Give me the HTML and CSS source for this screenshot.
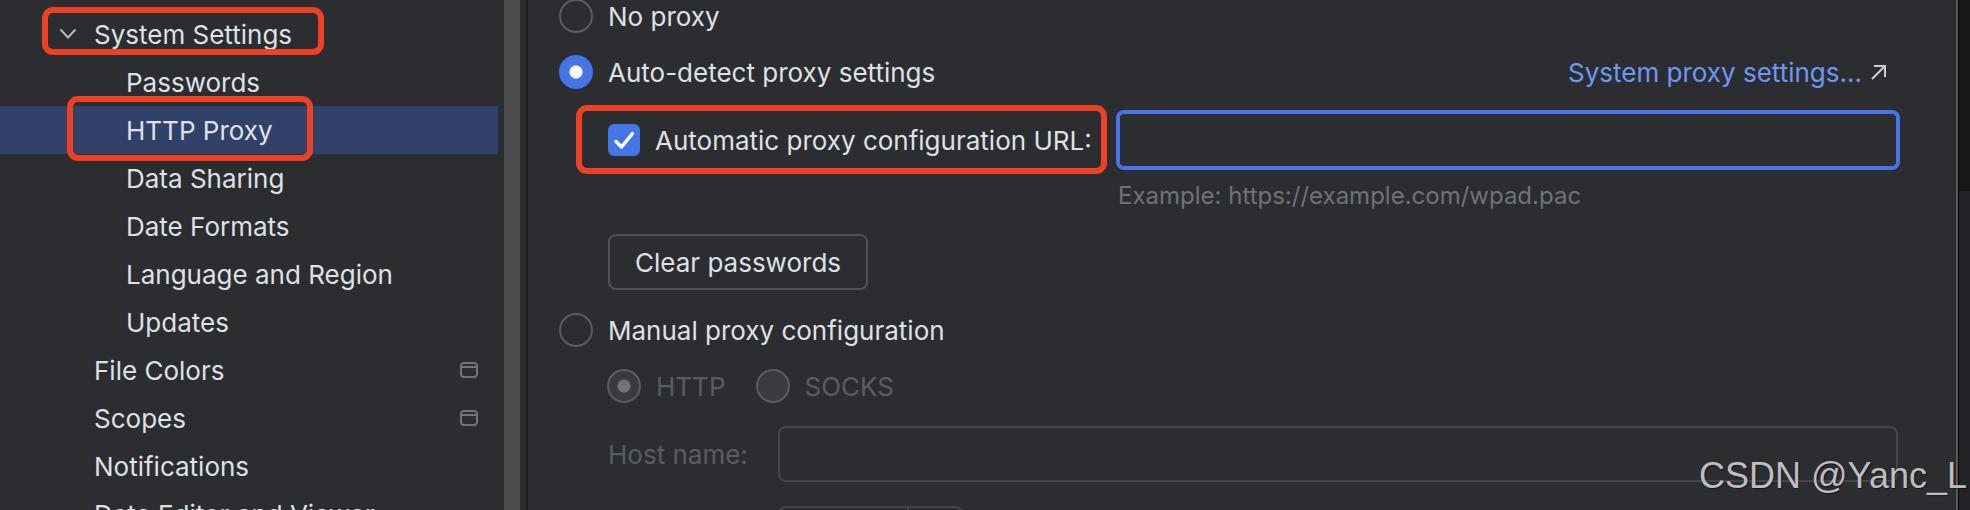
FILE: index.html
```html
<!DOCTYPE html>
<html lang="en">
<head>
<meta charset="utf-8">
<title>Settings - HTTP Proxy</title>
<link rel="stylesheet" href="styles.css">
</head>
<body>
<div class="window">
  <nav class="sidebar" aria-label="Settings categories">
    <ul class="tree">
      <li><a class="row" href="#system">
        <svg class="chevron" viewBox="0 0 18 12" aria-hidden="true"><path d="M2 2l7 7.500l7-7.500"/></svg>
        <span class="text marked marked-parent">System Settings</span></a></li>
      <li><a class="row child" href="#passwords"><span class="text">Passwords</span></a></li>
      <li><a class="row child selected" href="#proxy" aria-current="page"><span class="text marked marked-child">HTTP Proxy</span></a></li>
      <li><a class="row child" href="#sharing"><span class="text">Data Sharing</span></a></li>
      <li><a class="row child" href="#dates"><span class="text">Date Formats</span></a></li>
      <li><a class="row child" href="#language"><span class="text">Language and Region</span></a></li>
      <li><a class="row child" href="#updates"><span class="text">Updates</span></a></li>
      <li><a class="row" href="#colors"><span class="text">File Colors</span>
        <svg class="project" viewBox="0 0 18 16" aria-hidden="true"><rect x="1" y="1" width="16" height="14" rx="3"/><path d="M1 5h16"/></svg></a></li>
      <li><a class="row" href="#scopes"><span class="text">Scopes</span>
        <svg class="project" viewBox="0 0 18 16" aria-hidden="true"><rect x="1" y="1" width="16" height="14" rx="3"/><path d="M1 5h16"/></svg></a></li>
      <li><a class="row" href="#notifications"><span class="text">Notifications</span></a></li>
      <li><a class="row" href="#data"><span class="text">Data Editor and Viewer</span></a></li>
    </ul>
  </nav>
  <div class="scrollbar"></div>
  <main class="content">
    <form class="form">
      <div class="line">
        <label class="option"><input class="radio" type="radio" name="mode"><span class="text">No proxy</span></label>
      </div>
      <div class="line">
        <label class="option"><input class="radio" type="radio" name="mode" checked><span class="text">Auto-detect proxy settings</span></label>
        <a class="link" href="#system-proxy"><span class="text">System proxy settings...</span>
          <svg class="arrow" viewBox="0 0 16 16" aria-hidden="true"><path d="M1 15L14 2M3 2h11v11"/></svg></a>
      </div>
      <div class="auto">
        <label class="option marked marked-url"><input class="check" type="checkbox" checked><span class="text">Automatic proxy configuration URL:</span></label>
        <input class="field focused" type="text" aria-label="Automatic proxy configuration URL">
        <p class="hint">Example: https://example.com/wpad.pac</p>
      </div>
      <button class="button" type="button"><span class="text">Clear passwords</span></button>
      <div class="line">
        <label class="option"><input class="radio" type="radio" name="mode"><span class="text">Manual proxy configuration</span></label>
      </div>
      <div class="line protocols">
        <label class="option"><input class="radio" type="radio" name="protocol" checked disabled><span class="text">HTTP</span></label>
        <label class="option"><input class="radio" type="radio" name="protocol" disabled><span class="text">SOCKS</span></label>
      </div>
      <div class="manual">
        <label class="text" for="host">Host name:</label>
        <input class="field" id="host" type="text" disabled>
        <div class="spinner">
          <input class="spinner-value" type="text" aria-label="Port number" disabled>
          <button class="spinner-button" type="button" aria-label="Change port" disabled></button>
        </div>
      </div>
    </form>
  </main>
  <div class="backdrop"></div>
</div>
<div class="watermark">CSDN @Yanc_L</div>
</body>
</html>
```
FILE: styles.css
```css
* { box-sizing: border-box; }

body {
  margin: 0;
  background: #2b2d30;
  color: #dfe1e5;
  font-family: Inter, "Liberation Sans", sans-serif;
  font-size: 26px;
  line-height: 32px;
}

input, button { font: inherit; color: inherit; margin: 0; }

/* Optical centring of labels against icons and controls */
.text { display: block; padding-top: 2px; }

.window {
  display: flex;
  height: 100vh;
  overflow: hidden;
}

/* Category tree */
.sidebar { flex: 0 0 504px; padding: 10px 6px 0 0; }
.tree { list-style: none; margin: 0; padding: 0; }
.row {
  position: relative;
  display: flex;
  align-items: center;
  justify-content: space-between;
  height: 48px;
  padding: 0 20px 0 94px;
  color: inherit;
  text-decoration: none;
  white-space: nowrap;
}
.child { padding-left: 126px; }
.selected { background: #32416a; }
.chevron {
  position: absolute;
  left: 59px;
  width: 18px;
  height: 12px;
  fill: none;
  stroke: #b4b8bf;
  stroke-width: 2;
  stroke-linecap: round;
}
.project {
  width: 18px;
  height: 16px;
  fill: none;
  stroke: #6f737a;
  stroke-width: 2;
}
.scrollbar {
  flex: 0 0 24px;
  background: linear-gradient(to right, #4a4b4d 16px, #2b2d30 16px 22px, #1e1f22 22px);
}

/* Red call-out frames drawn over the labels */
.marked { position: relative; }
.marked::after {
  content: "";
  position: absolute;
  border: 6px solid #ed4025;
  border-radius: 11px;
  pointer-events: none;
}
.marked-parent::after { inset: -10px -32px -4px -52px; }
.marked-child::after { inset: -17px -40px -14px -59px; }
.marked-url::after { inset: -5px 9px -4px -32px; }

/* Proxy form */
.content { flex: 1; min-width: 0; padding: 0 56px 0 31px; }
.form { margin-top: -12px; }
.line {
  display: flex;
  align-items: center;
  justify-content: space-between;
  height: 56px;
}
.option { display: flex; align-items: center; gap: 15px; white-space: nowrap; }
.radio {
  appearance: none;
  width: 34px;
  height: 34px;
  border: 2px solid #5a5d63;
  border-radius: 50%;
}
.radio:checked {
  border-color: #4675e8;
  background: radial-gradient(circle, #fff 6px, #4675e8 7px);
}
.radio:disabled { border-color: #5a5d63; background: #393b40; }
.radio:disabled:checked { background: radial-gradient(circle, #6f737a 6px, #393b40 7px); }
.check {
  appearance: none;
  display: grid;
  place-items: center;
  width: 32px;
  height: 32px;
  border-radius: 6px;
  background: #4675e8;
}
.check::before {
  content: "";
  width: 24px;
  height: 24px;
  background: url("data:image/svg+xml,%3Csvg xmlns='http://www.w3.org/2000/svg' viewBox='0 0 24 24'%3E%3Cpath d='M4 13.500L9.500 19L20.500 5.500' fill='none' stroke='white' stroke-width='3.500' stroke-linecap='round' stroke-linejoin='round'/%3E%3C/svg%3E");
}
.link {
  display: flex;
  align-items: center;
  gap: 9px;
  padding-right: 13px;
  color: #6f98f5;
  text-decoration: none;
  white-space: nowrap;
}
.arrow { width: 16px; height: 16px; fill: none; stroke: #ced0d6; stroke-width: 2; }
.auto {
  display: grid;
  grid-template-columns: 508px 1fr;
  align-items: stretch;
  row-gap: 10px;
  margin-top: 10px;
  padding-left: 49px;
}
.field {
  width: 100%;
  height: 56px;
  padding: 0 14px;
  border: 2px solid #43454a;
  border-radius: 8px;
  background: transparent;
  outline: none;
}
.focused { height: 60px; border: 4px solid #4675e8; }
.hint {
  grid-column: 2;
  margin: 0;
  padding-left: 2px;
  color: #6f737a;
  font-size: 24px;
}
.button {
  display: block;
  height: 56px;
  margin: 22px 0 12px 49px;
  padding: 0 25px;
  border: 2px solid #4e5157;
  border-radius: 8px;
  background: transparent;
}
.protocols {
  justify-content: flex-start;
  gap: 30px;
  padding-left: 48px;
  color: #5a5d63;
}
.manual {
  display: grid;
  grid-template-columns: 170px 1fr;
  align-items: center;
  row-gap: 24px;
  margin-top: 12px;
  padding: 0 2px 0 49px;
  color: #5a5d63;
}
.spinner {
  display: flex;
  grid-column: 2;
  width: 185px;
  height: 56px;
  border: 2px solid #43454a;
  border-radius: 8px;
}
.spinner-value { flex: 1; min-width: 0; border: 0; background: transparent; }
.spinner-button {
  flex: 0 0 54px;
  border: 0;
  border-left: 2px solid #43454a;
  background: transparent;
}

/* Strip of the window behind the dialog */
.backdrop {
  flex: 0 0 14px;
  border-left: 2px solid #5a5b5d;
  box-shadow: inset 1px 0 #000;
  background: linear-gradient(#17181a 191px, #222327 191px);
}

.watermark {
  position: absolute;
  right: 3px;
  bottom: 14px;
  color: #bebebe;
  font-family: "Liberation Sans", Arial, sans-serif;
  font-size: 36px;
  line-height: 40px;
  text-shadow: 1px 1px 1px #00000080;
}
```
